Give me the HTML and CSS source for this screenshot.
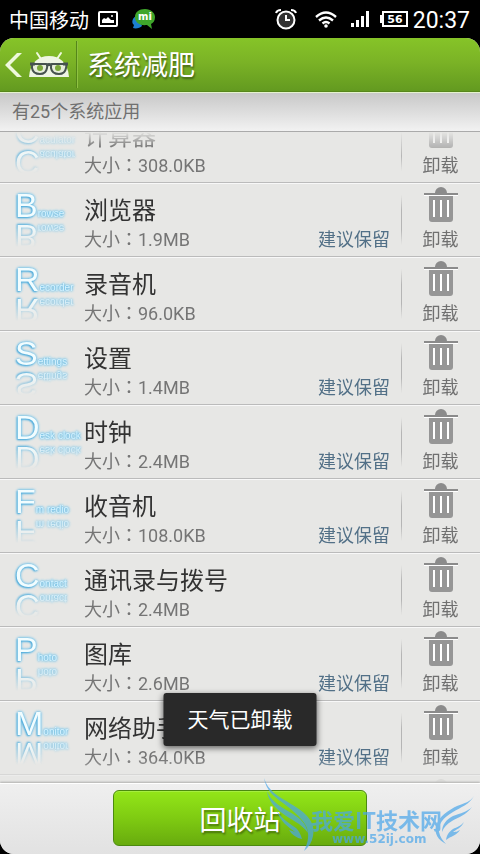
FILE: index.html
```html
<!DOCTYPE html>
<html lang="zh-CN">
<head>
  <meta charset="UTF-8">
  <meta name="viewport" content="width=device-width, initial-scale=1.0">
  <title>系统减肥</title>
  <link rel="stylesheet" href="styles.css">
</head>
<body>
  <svg class="defs" aria-hidden="true">
    <symbol id="trash" viewBox="0 0 34 36">
      <path d="M11 6a6 6 0 0 1 12 0h11v2H0V6z" fill="#8b8b8b"/>
      <path d="M0 8h34v1H0z" fill="#fff"/>
      <path d="M5 9h24v23a3 3 0 0 1-3 3H8a3 3 0 0 1-3-3z" fill="#969696"/>
      <path d="M9 13h2v17H9zM16 13h2v17h-2zM23 13h2v17h-2z" fill="#fff"/>
    </symbol>
  </svg>

  <div class="status">
    <span class="carrier">中国移动</span>
    <svg class="pic" width="20" height="16" viewBox="0 0 20 16">
      <rect x="1" y="1" width="18" height="14" rx="1" fill="none" stroke="#fff" stroke-width="2"/>
      <path d="M4 12V9l2-2 2 1 2-2 3 3h3v3z" fill="#fff"/>
      <circle cx="14" cy="5" r="1" fill="#fff"/>
    </svg>
    <svg class="mi" width="25" height="22" viewBox="0 0 25 22">
      <path d="M7 7C1 9 0 15 3 17l-1 3c3 1 7 0 9-2z" fill="#1c7fd0"/>
      <path d="M14 1c6 0 10 4 10 8s-2 6-4 7l1 5-5-4C8 18 4 14 4 9s4-8 10-8z" fill="#3fa62b"/>
      <text x="14" y="12" text-anchor="middle">mi</text>
    </svg>
    <div class="status-right">
      <svg width="22" height="22" viewBox="0 0 22 22" fill="none" stroke="#fff">
        <circle cx="11" cy="12" r="8.5" fill="#333" stroke-width="2"/>
        <path d="M11 7v5h4" stroke-width="2"/>
        <path d="M1 5q1-3 5-3M21 5q-1-3-5-3" stroke-width="2"/>
      </svg>
      <svg class="wifi" width="22" height="17" viewBox="0 0 22 17" fill="none" stroke="#fff" stroke-width="2.4">
        <path d="M1 6q10-9 20 0M4 9.500q7-6 14 0M7.500 12.500q3.500-3 7 0"/>
        <circle cx="11" cy="15" r="1.800" fill="#fff" stroke="none"/>
      </svg>
      <svg class="signal" width="18" height="16" viewBox="0 0 18 16" fill="#fff">
        <path d="M0 12h3v4H0zM5 9h3v7H5zM10 5h3v11h-3zM15 0h3v16h-3z"/>
      </svg>
      <svg class="battery" width="28" height="16" viewBox="0 0 28 16">
        <path d="M0 4h3v8H0z" fill="#fff"/>
        <rect x="3" y="1" width="24" height="14" fill="none" stroke="#fff" stroke-width="2"/>
        <text x="15" y="12" text-anchor="middle">56</text>
      </svg>
      <span class="time">20:37</span>
    </div>
  </div>

  <main class="app">
    <header class="header">
      <a class="back" href="#" aria-label="返回">
        <svg width="17" height="26" viewBox="0 0 17 26">
          <path d="M12 1h5L5 13l12 12h-5L0 13z" fill="#eef8dc"/>
        </svg>
        <svg width="40" height="28" viewBox="0 0 40 28">
          <path d="M8 2l4 6M32 2l-4 6" stroke="#eef8dc" stroke-width="2" stroke-linecap="round"/>
          <path d="M0 26C1 12 9 5 20 5s19 7 20 21z" fill="#eef5e4"/>
          <path d="M4 13h13q2 0 1 4-1 6-7 6-7 0-8-6 0-4 1-4zM23 13h13q2 0 1 4-1 6-7 6-7 0-8-6 0-4 1-4z" fill="#e6eedb" stroke="#46534f" stroke-width="2"/>
          <path d="M1 13h5M17 14q3-1 6 0M34 13h5" stroke="#46534f" stroke-width="3" fill="none"/>
          <circle cx="11" cy="17" r="3" fill="#7ba93a"/>
          <circle cx="29" cy="17" r="3" fill="#7ba93a"/>
        </svg>
      </a>
      <h1>系统减肥</h1>
    </header>

    <p class="count">有25个系统应用</p>

    <div class="list-wrap">
      <ul class="list">
        <li class="row">
          <div class="icon"><b>C</b>aculator</div>
          <div class="info"><h2>计算器</h2><p>大小：308.0KB</p></div>
          <button class="uninstall"><svg><use href="#trash"/></svg>卸载</button>
        </li>
        <li class="row">
          <div class="icon"><b>B</b>rowse</div>
          <div class="info"><h2>浏览器</h2><p>大小：1.9MB</p></div>
          <span class="keep">建议保留</span>
          <button class="uninstall"><svg><use href="#trash"/></svg>卸载</button>
        </li>
        <li class="row">
          <div class="icon"><b>R</b>ecorder</div>
          <div class="info"><h2>录音机</h2><p>大小：96.0KB</p></div>
          <button class="uninstall"><svg><use href="#trash"/></svg>卸载</button>
        </li>
        <li class="row">
          <div class="icon"><b>S</b>ettings</div>
          <div class="info"><h2>设置</h2><p>大小：1.4MB</p></div>
          <span class="keep">建议保留</span>
          <button class="uninstall"><svg><use href="#trash"/></svg>卸载</button>
        </li>
        <li class="row">
          <div class="icon"><b>D</b>esk clock</div>
          <div class="info"><h2>时钟</h2><p>大小：2.4MB</p></div>
          <span class="keep">建议保留</span>
          <button class="uninstall"><svg><use href="#trash"/></svg>卸载</button>
        </li>
        <li class="row">
          <div class="icon"><b>F</b>m redio</div>
          <div class="info"><h2>收音机</h2><p>大小：108.0KB</p></div>
          <span class="keep">建议保留</span>
          <button class="uninstall"><svg><use href="#trash"/></svg>卸载</button>
        </li>
        <li class="row">
          <div class="icon"><b>C</b>ontact</div>
          <div class="info"><h2>通讯录与拨号</h2><p>大小：2.4MB</p></div>
          <button class="uninstall"><svg><use href="#trash"/></svg>卸载</button>
        </li>
        <li class="row">
          <div class="icon"><b>P</b>hoto</div>
          <div class="info"><h2>图库</h2><p>大小：2.6MB</p></div>
          <span class="keep">建议保留</span>
          <button class="uninstall"><svg><use href="#trash"/></svg>卸载</button>
        </li>
        <li class="row">
          <div class="icon"><b>M</b>onitor</div>
          <div class="info"><h2>网络助手</h2><p>大小：364.0KB</p></div>
          <span class="keep">建议保留</span>
          <button class="uninstall"><svg><use href="#trash"/></svg>卸载</button>
        </li>
        <li class="row">
          <button class="uninstall" aria-label="卸载"><svg><use href="#trash"/></svg></button>
        </li>
      </ul>
    </div>

    <footer class="footer">
      <button class="recycle">回收站</button>
    </footer>
  </main>

  <div class="toast" role="status">天气已卸载</div>

  <svg class="watermark" width="214" height="76" viewBox="0 0 214 76">
    <path d="M1 0C5 13 15 18 28 26C44 35 53 45 50 58C49 64 46 69 41 73C45 65 47 56 43 48C38 38 26 30 20 25C10 18 3 12 1 0z"/>
    <path d="M4 13C8 24 20 30 30 36C38 41 43 46 45 55C38 45 28 42 19 35C11 29 5 22 4 13z"/>
    <path d="M14 33C20 42 26 45 33 50C37 54 38 58 39 61C34 60 29 57 26 52C29 53 30 53 32 54C25 49 17 43 14 33z"/>
    <path d="M211 18C206 27 198 29 190 34C180 40 175 46 176 54C177 59 180 63 183 66C175 62 171 55 173 48C176 38 186 32 194 28C202 25 207 24 211 18z"/>
    <path d="M209 29C203 37 196 39 189 43C184 46 181 49 179 54C179 46 184 41 190 38C198 35 204 34 209 29z"/>
    <path d="M201 44C198 50 194 51 190 54C194 54 195 53 197 52C193 58 188 58 183 62C184 56 186 54 190 51C194 49 198 48 201 44z"/>
    <text class="wm-name" x="48" y="51">我爱IT技术网</text>
    <text class="wm-url" x="69" y="65">www.52ij.com</text>
  </svg>
</body>
</html>
```
FILE: styles.css
```css
* {
  box-sizing: border-box;
}
body {
  margin: 0;
  height: 100vh;
  display: flex;
  flex-direction: column;
  position: relative;
  overflow: hidden;
  background: #000;
  font-family: Roboto, "Noto Sans CJK SC", sans-serif;
  color: #333;
}
h1, h2, p, ul {
  margin: 0;
  padding: 0;
  font-weight: normal;
}
button {
  border: none;
  background: none;
  padding: 0;
  font-family: inherit;
  cursor: pointer;
}
.defs {
  position: absolute;
  width: 0;
  height: 0;
}

/* status bar */
.status {
  flex: none;
  height: 38px;
  padding: 0 10px 0 9px;
  display: flex;
  align-items: center;
  color: #fff;
  font-size: 20px;
}
.pic {
  margin-left: 9px;
}
.mi {
  margin-left: 13px;
}
.mi text {
  font: bold 10px "DejaVu Sans", sans-serif;
  fill: #fff;
}
.status-right {
  margin-left: auto;
  display: flex;
  align-items: center;
}
.wifi {
  margin-left: 18px;
}
.signal {
  margin-left: 14px;
}
.battery {
  margin: 0 5px 0 11px;
}
.battery text {
  font: bold 11px "DejaVu Sans", sans-serif;
  fill: #fff;
}
.time {
  font-size: 23px;
  line-height: 38px;
  padding-top: 4px;
}

/* app */
.app {
  flex: 1;
  min-height: 0;
  display: flex;
  flex-direction: column;
  border-radius: 14px;
  overflow: hidden;
  background: #e7e7e5;
}
.header {
  flex: none;
  height: 54px;
  display: flex;
  align-items: center;
  background: linear-gradient(#86c428, #7bb326 45%, #639a20);
  border-bottom: 1px solid #57871c;
}
.back {
  height: 47px;
  width: 77px;
  padding-left: 5px;
  display: flex;
  align-items: center;
  gap: 7px;
  border-right: 1px solid #55861a;
  box-shadow: 1px 0 #8fc242;
}
.header h1 {
  margin-left: 10px;
  padding-top: 2px;
  font-size: 27px;
  line-height: 40px;
  color: #fff;
  text-shadow: 1px 2px 2px rgba(0,0,0,0.4);
}
.count {
  flex: none;
  height: 40px;
  padding-left: 12px;
  border-top: 1px solid #e4f3cc;
  border-bottom: 1px solid #aaa;
  background: linear-gradient(#c8c8c8, #f2f2f2);
  font-size: 18px;
  line-height: 38px;
  color: #707070;
}
.list-wrap {
  flex: 1;
  min-height: 0;
  overflow: hidden;
  -webkit-mask-image: linear-gradient(transparent, #000 24px, #000 calc(100% - 24px), transparent);
}
/* list is scrolled part of a row */
.list {
  margin-top: -23px;
  list-style: none;
}
.row {
  height: 74px;
  display: flex;
  border-top: 1px solid #f8f8f8;
  border-bottom: 1px solid #bbb;
}
.icon {
  width: 69px;
  height: 34px;
  margin: 4px 0 0 15px;
  line-height: 34px;
  white-space: nowrap;
  font-family: "Liberation Sans", sans-serif;
  font-size: 10px;
  color: #d8f4ff;
  text-shadow: 0 0 2px #5fb8e4, 0 0 3px #6cc0ea, 0 0 3px #6cc0ea;
  -webkit-box-reflect: below -2px linear-gradient(transparent 20%, #000);
}
.icon b {
  font-size: 34px;
  font-weight: normal;
  color: #f2fdff;
  text-shadow: -1px 1px 2px #4aa9da, 0 0 3px #6cc0ea, 0 0 3px #6cc0ea;
}
.info {
  flex: 1;
  padding-top: 12px;
  white-space: nowrap;
}
.info h2 {
  font-size: 24px;
  line-height: 30px;
}
/* the TC forms centre the full-width colon */
.info p {
  font-family: Roboto, "Noto Sans CJK TC", sans-serif;
  font-feature-settings: "locl" 0;
  font-size: 18px;
  line-height: 28px;
  color: #757575;
}
.keep {
  margin: 42px 11px 0 0;
  font-size: 18px;
  line-height: 28px;
  color: #527087;
}
.uninstall {
  width: 79px;
  margin-left: auto;
  padding-top: 3px;
  display: flex;
  flex-direction: column;
  align-items: center;
  font-size: 18px;
  line-height: 28px;
  color: #707070;
  background: linear-gradient(transparent, #b5b5b5 30%, #b5b5b5 70%, transparent) left center / 1px 50px no-repeat;
}
.info + .uninstall {
  margin-left: 0;
}
.uninstall svg {
  width: 34px;
  height: 36px;
  margin-bottom: 3px;
}

.footer {
  flex: none;
  height: 71px;
  padding-top: 6px;
  border-top: 1px solid #fff;
  box-shadow: 0 -1px 2px rgba(0,0,0,0.25);
  background: linear-gradient(#efefef, #e2e2e2);
  text-align: center;
}
.recycle {
  width: 53%;
  height: 56px;
  border: 1px solid #4c8a10;
  border-radius: 6px;
  background: linear-gradient(#93e618, #7fcb12 50%, #68ab0e);
  box-shadow: inset 0 1px #a6ee40;
  color: #fff;
  font-size: 27px;
  text-shadow: 1px 2px 2px rgba(0,0,0,0.4);
}

.toast {
  position: absolute;
  left: 50%;
  bottom: 108px;
  transform: translateX(-50%);
  padding: 2px 24px 0;
  border-radius: 3px;
  background: #292929;
  box-shadow: 0 2px 6px rgba(0,0,0,0.6);
  color: #fff;
  font-size: 21px;
  line-height: 51px;
  white-space: nowrap;
}
.watermark {
  position: absolute;
  right: 3px;
  bottom: 0;
  fill: #4aa6ea;
  opacity: 0.7;
  pointer-events: none;
}
.wm-name {
  font: bold 22px "Noto Sans CJK SC", sans-serif;
}
.wm-url {
  font: bold 12px "DejaVu Sans", sans-serif;
}
```
